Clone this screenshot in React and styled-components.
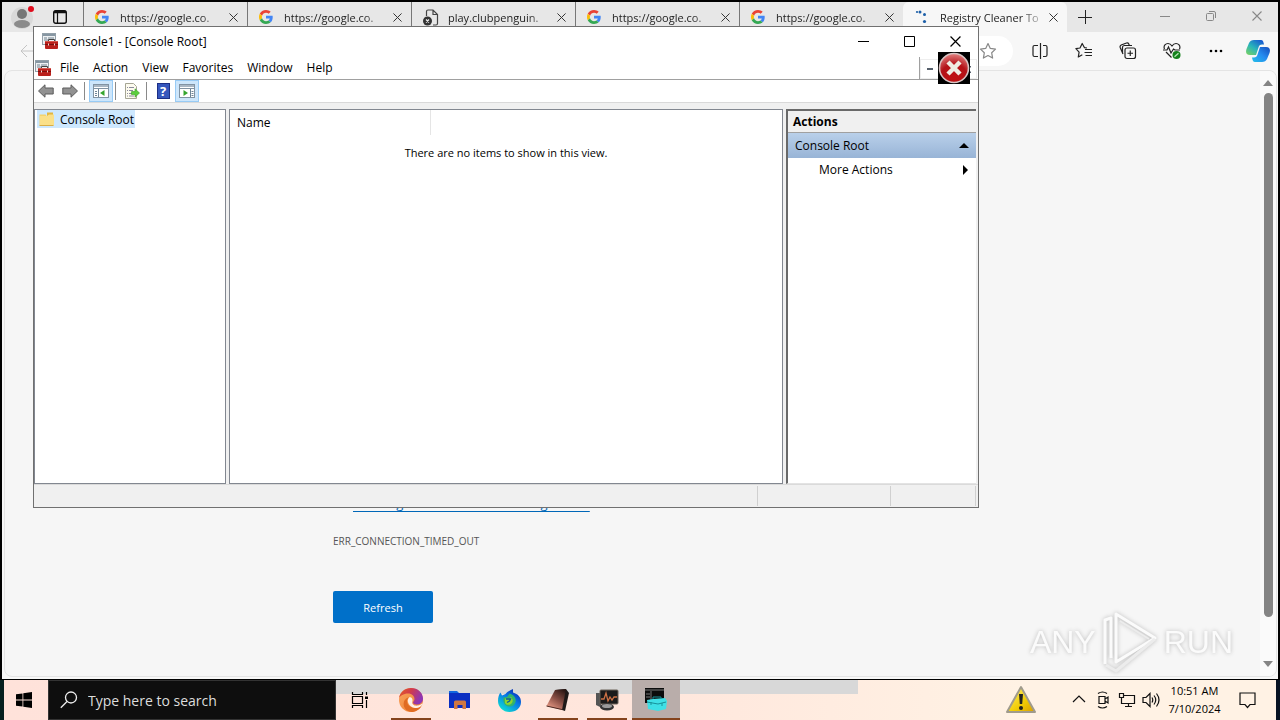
import React, { useState } from 'react';
import styled, { createGlobalStyle } from 'styled-components';

const tabs = [
  { id: 1, title: 'https://google.co.', icon: 'google' },
  { id: 2, title: 'https://google.co.', icon: 'google' },
  { id: 3, title: 'play.clubpenguin.', icon: 'broken' },
  { id: 4, title: 'https://google.co.', icon: 'google' },
  { id: 5, title: 'https://google.co.', icon: 'google' },
  { id: 6, title: 'Registry Cleaner To', icon: 'loading' },
];

const menus = ['File', 'Action', 'View', 'Favorites', 'Window', 'Help'];

const GoogleIcon = () => (
  <svg width="14" height="14" viewBox="0 0 48 48">
    <path fill="#EA4335" d="M24 9.5c3.54 0 6.71 1.22 9.21 3.6l6.85-6.85C35.9 2.38 30.47 0 24 0 14.62 0 6.51 5.38 2.56 13.22l7.98 6.19C12.43 13.72 17.74 9.5 24 9.5z" />
    <path fill="#4285F4" d="M46.98 24.55c0-1.57-.15-3.09-.38-4.55H24v9.02h12.94c-.58 2.96-2.26 5.48-4.78 7.18l7.73 6c4.51-4.18 7.09-10.36 7.09-17.65z" />
    <path fill="#FBBC05" d="M10.53 28.59c-.48-1.45-.76-2.99-.76-4.59s.27-3.14.76-4.59l-7.98-6.19C.92 16.46 0 20.12 0 24c0 3.88.92 7.54 2.56 10.78l7.97-6.19z" />
    <path fill="#34A853" d="M24 48c6.48 0 11.93-2.13 15.89-5.81l-7.73-6c-2.15 1.45-4.92 2.3-8.16 2.3-6.26 0-11.57-4.22-13.47-9.91l-7.98 6.19C6.51 42.62 14.62 48 24 48z" />
  </svg>
);

const BrokenPageIcon = () => (
  <svg width="16" height="17" viewBox="0 0 16 17" fill="none">
    <path d="M3.5 7V2.5A1.5 1.5 0 0 1 5 1h5l4.5 4.5v9A1.5 1.5 0 0 1 13 16h-3M10 1v4.500h4.500" stroke="#444" strokeWidth="1.200" />
    <circle cx="4.500" cy="12" r="4.500" fill="#333" />
    <path d="M3 10.500l3 3m0-3l-3 3" stroke="#eee" strokeWidth="1.200" />
  </svg>
);

const LoadingIcon = () => (
  <svg width="14" height="14" viewBox="0 0 14 14" fill="#1d5fa8">
    <circle cx="2" cy="2" r="1.100" />
    <circle cx="5" cy="2" r="1.500" />
    <circle cx="9.500" cy="4.500" r="1.500" />
    <circle cx="9.500" cy="11.500" r="1.600" />
  </svg>
);

const CrossIcon = ({ size = 9 }) => (
  <svg width={size} height={size} viewBox="0 0 10 10" fill="none" stroke="currentColor" strokeWidth="1.100">
    <path d="M.5.5l9 9m0-9l-9 9" />
  </svg>
);

const ProfileIcon = () => (
  <svg width="24" height="24" viewBox="0 0 24 24">
    <circle cx="11" cy="13" r="11" fill="#d9d9d9" />
    <circle cx="11" cy="9" r="5" fill="#777" />
    <ellipse cx="11" cy="19" rx="8" ry="4" fill="#8b8b8b" />
    <circle cx="20" cy="4" r="3" fill="#e00b1c" />
  </svg>
);

const WorkspaceIcon = () => (
  <svg width="14" height="14" viewBox="0 0 14 14" fill="none" stroke="#111">
    <rect x=".7" y=".7" width="12.600" height="12.600" rx="2" strokeWidth="1.400" />
    <path d="M1 2h12" strokeWidth="2.500" />
    <path d="M4.500 3v10" strokeWidth="1.200" />
  </svg>
);

const ConsoleIcon = () => (
  <svg width="16" height="16" viewBox="0 0 16 16">
    <rect x=".5" y=".5" width="13" height="11" fill="#eef1f3" stroke="#93a0a9" />
    <rect x="1" y="1" width="12" height="2" fill="#8696a2" />
    <path d="M2 5h3m1 0h6M2 7h4" stroke="#71828f" />
    <path d="M6.500 8.500V6.500h6v2" fill="none" stroke="#444" />
    <rect x="3" y="8" width="13" height="8" rx="1" fill="#b9201c" />
    <path d="M3.500 8.500h12" stroke="#d9564b" />
    <path d="M3 11.500h13" stroke="#7d100e" />
    <path d="M6.500 10.500v2m6-2v2" stroke="#f5d9d5" />
  </svg>
);

const ArrowIcon = ({ right }) => (
  <svg width="16" height="14" viewBox="0 0 16 14">
    <path
      d={right ? 'M15.500 7L9 .8V4H.8v6H9v3.200z' : 'M.5 7L7 .8V4h8.200v6H7v3.200z'}
      fill="#929292"
      stroke="#5c5c5c"
    />
  </svg>
);

const PaneIcon = ({ right }) => (
  <svg width="16" height="14" viewBox="0 0 16 14">
    <rect x=".5" y=".5" width="15" height="13" fill="#fff" stroke="#8193a3" />
    <rect x="1" y="1" width="14" height="2" fill="#a9b7c4" />
    <path d="M1 4.500h14" stroke="#8193a3" />
    <path d={right ? 'M11.500 5v8M12.500 7.500h2m-2 2h2m-2 2h2' : 'M5.500 5v8M2 7.500h2m-2 2h2m-2 2h2'} stroke="#6e8496" />
    <path d={right ? 'M4.500 6v6L9 9z' : 'M11.500 6v6L7 9z'} fill="#35a52d" />
  </svg>
);

const ExportIcon = () => (
  <svg width="16" height="16" viewBox="0 0 16 16">
    <path d="M1.500.5h8l3 3v12h-11z" fill="#fdfbef" stroke="#a5a594" />
    <path d="M3 4.500h1m1 0h5M3 7.500h1m1 0h4M3 10.500h1m1 0h3M3 13h1m1 0h5" stroke="#8a8a9d" />
    <path d="M7.500 8.500H11V5.800l4.500 4.200-4.500 4.200v-2.700H7.500z" fill="#5bcf3e" stroke="#3da028" strokeWidth=".6" />
  </svg>
);

const FolderIcon = () => (
  <svg width="16" height="14" viewBox="0 0 16 14">
    <path d="M8 .5h6v5H8z" fill="#e3b740" />
    <path d="M.5 2.500h6l1.500 2h6.500v9H.5z" fill="#f4d36e" />
    <path d="M1 4h7l2-1.500h5V13H1z" fill="#fae08a" />
    <path d="M.5 13.500h14" stroke="#d9ae48" />
  </svg>
);

const ErrorIcon = () => (
  <svg width="32" height="32" viewBox="0 0 32 32">
    <defs>
      <radialGradient id="errorRed" cx=".5" cy=".85" r=".8">
        <stop offset="0" stopColor="#c01010" />
        <stop offset=".6" stopColor="#b31218" />
        <stop offset="1" stopColor="#dd7474" />
      </radialGradient>
    </defs>
    <circle cx="16" cy="16" r="14.500" fill="url(#errorRed)" stroke="#d8c4c4" strokeWidth="1.600" />
    <path d="M10 10l12 12m0-12L10 22" stroke="#efece2" strokeWidth="4.500" />
  </svg>
);

const StarIcon = ({ lines }) => (
  <svg width="18" height="18" viewBox="0 0 18 18" fill="none" stroke="currentColor" strokeWidth="1.200" strokeLinejoin="round">
    {lines ? (
      <path d="M12 6L9.500 5.700 7.200 1.500 5 6 .9 6.700l3.200 3.400L3.300 15l4-2.200M10 7.500h7M9.500 10.500H17M10.500 13.500H17" />
    ) : (
      <path d="M9 1.500l2.300 4.900 5.200.7-3.800 3.700.9 5.300L9 13.500l-4.600 2.600.9-5.300L1.500 7.100l5.200-.7z" />
    )}
  </svg>
);

const SplitIcon = () => (
  <svg width="16" height="16" viewBox="0 0 16 16" fill="none" stroke="#222" strokeWidth="1.200">
    <path d="M8.500 0v16M6 2.500H2.500A1.500 1.500 0 0 0 1 4v8a1.500 1.500 0 0 0 1.500 1.500H6M11 2.500h2.500A1.500 1.500 0 0 1 15 4v8a1.500 1.500 0 0 1-1.500 1.500H11" />
  </svg>
);

const CollectionsIcon = () => (
  <svg width="18" height="18" viewBox="0 0 18 18" fill="none" stroke="#222" strokeWidth="1.200">
    <rect x="6" y="6" width="10.500" height="10.500" rx="2" />
    <path d="M11.250 8.500v5.500M8.500 11.250H14M4 12L1.200 5.500C.8 4.300 1.200 3.500 2.200 3L7.500 1c1-.3 1.800 0 2.300 1l.5 1.500M3.500 11V5.500a2 2 0 0 1 2-2h7.500" />
  </svg>
);

const HealthIcon = () => (
  <svg width="18" height="18" viewBox="0 0 18 18" fill="none" stroke="#222" strokeWidth="1.200">
    <path d="M1.500 7C0 3.500 3 1.500 5 1.500c2 0 3 1 4 2.500 1-1.500 2-2.500 4-2.500s5 2 3.500 5.500M3 10l5.500 5.500" />
    <path d="M0 8h4l1.500-3L8 11l2.500-4L12 8h5" />
    <circle cx="13.500" cy="13" r="4" fill="#13811b" stroke="none" />
    <path d="M11.500 14.800l4-3.600" stroke="#b8e6b8" />
  </svg>
);

const CopilotIcon = () => (
  <svg width="24" height="24" viewBox="0 0 24 24">
    <defs>
      <linearGradient id="copilotLeft" x1="0" y1="1" x2=".8" y2="0">
        <stop offset="0" stopColor="#7ed35c" />
        <stop offset=".5" stopColor="#29b5ba" />
        <stop offset="1" stopColor="#185bd1" />
      </linearGradient>
      <linearGradient id="copilotRight" x1="1" y1="0" x2="0" y2="1">
        <stop offset="0" stopColor="#154cba" />
        <stop offset=".5" stopColor="#268cf0" />
        <stop offset="1" stopColor="#24bfe8" />
      </linearGradient>
    </defs>
    <path d="M8 1h7c2 0 2.500 2 3 4.500h-2c-2 0-3 1-3.500 3L10 16H4c-4 0-4.500-3-3.500-6L3 4c1-2 2.500-3 5-3z" fill="url(#copilotLeft)" />
    <path d="M16 23H9c-2 0-2.500-2-3-4.500h2c2 0 3-1 3.500-3L14 8h6c4 0 4.500 3 3.500 6L21 20c-1 2-2.500 3-5 3z" fill="url(#copilotRight)" />
  </svg>
);

const WindowsIcon = () => (
  <svg width="16" height="16" viewBox="0 0 16 16" fill="#000">
    <path d="M0 2.300L6.500 1.400v6.200H0zM7.300 1.300L16 0v7.600H7.300zM0 8.400h6.500v6.200L0 13.700zM7.300 8.400H16V16l-8.700-1.300z" />
  </svg>
);

const SearchIcon = () => (
  <svg width="18" height="18" viewBox="0 0 18 18" fill="none" stroke="#eee" strokeWidth="1.300">
    <circle cx="11" cy="6.500" r="5.500" />
    <path d="M7 10.500L.8 16.800" />
  </svg>
);

const TaskViewIcon = () => (
  <svg width="18" height="16" viewBox="0 0 18 16" fill="none" stroke="#000" strokeWidth="1.200">
    <path d="M1.500 0v2.500h10V0M1.500 16v-2.500h10V16M1.500 4.500h10v7h-10zM15.500 0v3M15.500 8v8" />
    <path d="M14 4.500h3v2.500h-3z" fill="#000" stroke="none" />
  </svg>
);

const EdgeIcon = () => (
  <svg width="24" height="24" viewBox="0 0 24 24">
    <defs>
      <linearGradient id="edgeTop" x1="0" y1="0" x2="1" y2=".4">
        <stop offset="0" stopColor="#e8601f" />
        <stop offset=".5" stopColor="#d03a4e" />
        <stop offset="1" stopColor="#8f36b5" />
      </linearGradient>
      <linearGradient id="edgeBase" x1="0" y1="0" x2="1" y2="1">
        <stop offset="0" stopColor="#f9a55c" />
        <stop offset="1" stopColor="#ee7d33" />
      </linearGradient>
    </defs>
    <circle cx="12" cy="12" r="12" fill="url(#edgeBase)" />
    <path d="M0 10C1 4 6 0 12 0c7 0 12 5 12 10.500 0 4-3 6-6.500 6-2 0-3.500-.8-3.500-2 0-1 1.500-1.500 1.500-3.500C15.500 8 13 5.500 9 5.500 4.500 5.500 1 8 0 10z" fill="url(#edgeTop)" />
    <path d="M10 9.500C6 12 8 19 15 20c3 .4 5.500-.5 7.500-2-2 3.500-6 6-10 6C6.500 23.500 3.500 18 5 13.500c.8-2.300 2.700-4 5-4z" fill="#e06c23" />
    <path d="M10 9.500c2.200-.7 4.300 1.500 3.300 4.500-.5 2.500 2.200 4.200 5.700 3.500 1.500-.3 3-1 4-2l.5.500C22 19 19 20.500 16 20c-6-1-9-7-6-10.500z" fill="#fff0e6" />
  </svg>
);

const ExplorerIcon = () => (
  <svg width="22" height="20" viewBox="0 0 22 20">
    <path d="M0 1h8l2 2h11v5H0z" fill="#1268e0" />
    <path d="M0 3h21v15H0z" fill="#0a2fc2" />
    <path d="M5 19v-7q0-1.500 1.500-1.500h9q1.500 0 1.500 1.500v7h-3.500v-4h-5v4z" fill="#cf7840" />
  </svg>
);

const FirefoxIcon = () => (
  <svg width="23" height="23" viewBox="0 0 23 23">
    <defs>
      <linearGradient id="foxBlue" x1=".9" y1="0" x2=".2" y2="1">
        <stop offset="0" stopColor="#0a1cac" />
        <stop offset=".45" stopColor="#0779e6" />
        <stop offset="1" stopColor="#11e5cf" />
      </linearGradient>
    </defs>
    <path d="M2.500 3.500l1.500 3L7.500 5C9 3 12 1.500 15 0v3.500C20 5 23 8 23 13c0 6-5 10-11.500 10S0 18 0 12c0-4 1-6.500 2.500-8.500z" fill="url(#foxBlue)" />
    <path d="M5.500 8.500L9 8l2.500-3.500c4 1 7 4.500 6 8.500-1 3.500-4 5-7 4.500C7 17 4.500 13 5.500 8.500z" fill="#31b36d" />
    <path d="M7 9.500h4.500L13 8c2 2 2.500 5 0 7-2 1.500-5 1-6-1z" fill="#8bd431" />
    <path d="M8 10h4.500l-1 2-2.500 1.500" fill="none" stroke="#075e9f" strokeWidth="1.300" />
  </svg>
);

const NotebookIcon = () => (
  <svg width="24" height="24" viewBox="0 0 24 24">
    <defs>
      <linearGradient id="noteRed" x1=".8" y1="0" x2=".2" y2="1">
        <stop offset="0" stopColor="#2b1714" />
        <stop offset=".5" stopColor="#8d5147" />
        <stop offset="1" stopColor="#f0a08b" />
      </linearGradient>
    </defs>
    <path d="M9 2l11-1 3 4-4 18-3-1z" fill="#1f1918" />
    <path d="M9 2l11-1-4 21L.5 18z" fill="url(#noteRed)" />
    <path d="M.5 18l15.500 3.500" stroke="#4a2721" />
  </svg>
);

const MonitorAppIcon = () => (
  <svg width="24" height="24" viewBox="0 0 24 24">
    <path d="M1 5h5v12l6 1-3 3-8-4z" fill="#555" />
    <rect x="5" y="2" width="18" height="14" rx="1" fill="#1b1b1b" stroke="#6b6259" />
    <path d="M6 11h3l2-6 2 8 2-4 2 3 2-3h3" fill="none" stroke="#cd7245" strokeWidth="1.300" />
    <ellipse cx="12" cy="19" rx="7" ry="3.500" fill="#333" />
    <ellipse cx="12" cy="18" rx="5" ry="2" fill="#9a9a9a" />
  </svg>
);

const ToolboxAppIcon = () => (
  <svg width="24" height="24" viewBox="0 0 24 24">
    <rect x="1" y="0" width="19" height="15" fill="#0c0c0c" />
    <path d="M1 2h19M2 6h4M2 9h4M7 3v9" stroke="#777" />
    <path d="M3 12l6-1 12-1 2 3-1 8-8 2-10-2z" fill="#3ee0e6" />
    <path d="M3 14l11 2 8-2M9 11V9h8v1.500M7 14v3m11-2v3" fill="none" stroke="#16929a" />
  </svg>
);

const WarningIcon = () => (
  <svg width="32" height="30" viewBox="0 0 32 30">
    <defs>
      <linearGradient id="warnYellow" x1="0" y1="0" x2="1" y2="1">
        <stop offset="0" stopColor="#fff27a" />
        <stop offset=".6" stopColor="#f2cc05" />
        <stop offset="1" stopColor="#d89d00" />
      </linearGradient>
    </defs>
    <path d="M16 2L30 27H2z" fill="url(#warnYellow)" stroke="#a09b8c" strokeWidth="2" strokeLinejoin="round" />
    <path d="M14 9h4l-.8 10h-2.400z" fill="#222" />
    <circle cx="16" cy="23" r="2" fill="#222" />
  </svg>
);

const TrayGlyph = ({ name }) => {
  const shapes = {
    chevron: 'M3 11l6-6 6 6',
    camera: 'M5 5.500h6v7H5zM11 8l3-2v6l-3-2M4 2.500C7 .5 10 .5 13 2.500M4 15.500c3 2 6 2 9 0',
    network: 'M5 4.500h11.500v8H5M1.500 2.500h4v4h-4zM3.500 6.500v6H6M10.500 12.500v3M7 15.500h7',
    volume: 'M1 6.500h3l4-4v13l-4-4H1zM10 6.500q1.500 2.500 0 5M12 4.500q3.500 4.500 0 9M14.500 2.500q5 6.500 0 13',
  };
  return (
    <svg width="18" height="18" viewBox="0 0 18 18" fill="none" stroke="#111" strokeWidth="1.200">
      <path d={shapes[name]} />
    </svg>
  );
};

const PlayLogo = () => (
  <svg width="54" height="62" viewBox="0 0 54 62" fill="none" stroke="#fbfbfb" strokeWidth="3" strokeLinejoin="round">
    <path d="M2 53V9l6-2v40" />
    <path d="M13 3l39 24-39 24z" />
    <path d="M3 54l10 6 39-32" stroke="#ececec" />
    <path d="M17 10l29 18" stroke="#ececec" strokeWidth="2" />
  </svg>
);

const tabIcons = {
  google: <GoogleIcon />,
  broken: <BrokenPageIcon />,
  loading: <LoadingIcon />,
};

const apps = [
  { name: 'Microsoft Edge', icon: <EdgeIcon />, open: true },
  { name: 'File Explorer', icon: <ExplorerIcon /> },
  { name: 'Firefox', icon: <FirefoxIcon /> },
  { name: 'Registry', icon: <NotebookIcon />, open: true },
  { name: 'Performance Monitor', icon: <MonitorAppIcon />, open: true },
  { name: 'Management Console', icon: <ToolboxAppIcon />, open: true, active: true },
];

const Browser = () => {
  const [activeTab, setActiveTab] = useState(6);

  return (
    <BrowserFrame>
      <TabStrip>
        <ProfileButton aria-label="Profile"><ProfileIcon /></ProfileButton>
        <WorkspaceButton aria-label="Workspaces"><WorkspaceIcon /></WorkspaceButton>
        {tabs.map((tab) => (
          <Tab key={tab.id} $active={tab.id === activeTab}>
            <TabButton onClick={() => setActiveTab(tab.id)}>
              <TabIcon>{tabIcons[tab.icon]}</TabIcon>
              <TabTitle>{tab.title}</TabTitle>
            </TabButton>
            <TabClose aria-label="Close tab"><CrossIcon /></TabClose>
          </Tab>
        ))}
        <NewTab aria-label="New tab">
          <svg width="14" height="14" viewBox="0 0 14 14" stroke="#222"><path d="M7.500 0v14M0 7.500h14" /></svg>
        </NewTab>
        <BrowserControls>
          <BrowserControl aria-label="Minimize">
            <svg width="10" height="10" viewBox="0 0 10 10" stroke="currentColor"><path d="M0 5.500h10" /></svg>
          </BrowserControl>
          <BrowserControl aria-label="Restore">
            <svg width="10" height="10" viewBox="0 0 10 10" fill="none" stroke="currentColor">
              <rect x=".5" y="2.500" width="7" height="7" rx="1" />
              <path d="M3 .5h5q1.500 0 1.500 1.500v5" />
            </svg>
          </BrowserControl>
          <BrowserControl aria-label="Close"><CrossIcon size={10} /></BrowserControl>
        </BrowserControls>
      </TabStrip>
      <AddressRow>
        <BackButton aria-label="Back">
          <svg width="16" height="14" viewBox="0 0 16 14" fill="none" stroke="#c4c4c4"><path d="M16 7H1M7 1L1 7l6 6" /></svg>
        </BackButton>
        <AddressBar>
          <IconButton aria-label="Add to favorites" $muted><StarIcon /></IconButton>
        </AddressBar>
        <BrowserTools>
          <IconButton aria-label="Split screen"><SplitIcon /></IconButton>
          <IconButton aria-label="Favorites"><StarIcon lines /></IconButton>
          <IconButton aria-label="Collections"><CollectionsIcon /></IconButton>
          <IconButton aria-label="Browser essentials"><HealthIcon /></IconButton>
          <IconButton aria-label="Settings and more">
            <svg width="14" height="4" viewBox="0 0 14 4"><circle cx="2" cy="2" r="1.300" /><circle cx="7" cy="2" r="1.300" /><circle cx="12" cy="2" r="1.300" /></svg>
          </IconButton>
          <CopilotButton aria-label="Copilot"><CopilotIcon /></CopilotButton>
        </BrowserTools>
      </AddressRow>
      <Page>
        <PageBody>
          <DiagnosticsLink href="#diagnostics">Running Windows Network Diagnostics</DiagnosticsLink>
          <ErrorCode>ERR_CONNECTION_TIMED_OUT</ErrorCode>
          <RefreshButton>Refresh</RefreshButton>
        </PageBody>
        <ScrollTrack>
          <ScrollArrow $up />
          <ScrollThumb />
          <ScrollArrow />
        </ScrollTrack>
      </Page>
    </BrowserFrame>
  );
};

const ConsoleWindow = () => (
  <WindowFrame>
    <TitleBar>
      <ConsoleIcon />
      <WindowTitle>Console1 - [Console Root]</WindowTitle>
      <WindowButton aria-label="Minimize">
        <svg width="11" height="11" viewBox="0 0 11 11" stroke="#000"><path d="M0 5.500h11" /></svg>
      </WindowButton>
      <WindowButton aria-label="Maximize">
        <svg width="11" height="11" viewBox="0 0 11 11" fill="none" stroke="#000"><path d="M.5.5h10v10H.5z" /></svg>
      </WindowButton>
      <WindowButton aria-label="Close"><CrossIcon size={11} /></WindowButton>
    </TitleBar>
    <MenuBar>
      <ConsoleIcon />
      <MenuItems>
        {menus.map((menu) => (
          <MenuButton key={menu}>{menu}</MenuButton>
        ))}
      </MenuItems>
      <ChildControls>
        <ChildButton aria-label="Minimize child window">
          <svg width="6" height="2"><path d="M0 1h6" stroke="#56606c" strokeWidth="2" /></svg>
        </ChildButton>
        <ChildButton aria-label="Restore child window" />
        <ChildButton aria-label="Close child window">
          <svg width="7" height="7" viewBox="0 0 7 7" stroke="#56606c" strokeWidth="1.500"><path d="M0 0l7 7M7 0L0 7" /></svg>
        </ChildButton>
      </ChildControls>
    </MenuBar>
    <ToolBar>
      <ToolButton aria-label="Back"><ArrowIcon /></ToolButton>
      <ToolButton aria-label="Forward"><ArrowIcon right /></ToolButton>
      <ToolDivider />
      <ToolButton aria-label="Show console tree" $pressed><PaneIcon /></ToolButton>
      <ToolDivider />
      <ToolButton aria-label="Export list"><ExportIcon /></ToolButton>
      <ToolDivider />
      <ToolButton aria-label="Help"><HelpBadge>?</HelpBadge></ToolButton>
      <ToolButton aria-label="Show action pane" $pressed><PaneIcon right /></ToolButton>
    </ToolBar>
    <Panes>
      <TreePane>
        <TreeItem><FolderIcon />Console Root</TreeItem>
      </TreePane>
      <ListPane>
        <ListTable>
          <thead>
            <tr>
              <ListHeader>Name</ListHeader>
              <td />
            </tr>
          </thead>
          <tbody>
            <tr>
              <EmptyCell colSpan={2}>There are no items to show in this view.</EmptyCell>
            </tr>
          </tbody>
        </ListTable>
      </ListPane>
      <ActionsPane>
        <ActionsTitle>Actions</ActionsTitle>
        <ActionGroup>
          Console Root
          <svg width="10" height="5" viewBox="0 0 10 5"><path d="M0 5l5-5 5 5z" /></svg>
        </ActionGroup>
        <ActionItem>
          More Actions
          <svg width="5" height="10" viewBox="0 0 5 10"><path d="M0 0l5 5-5 5z" /></svg>
        </ActionItem>
      </ActionsPane>
    </Panes>
    <StatusBar>
      <StatusCell $grow />
      <StatusCell $width={133} />
      <StatusCell $width={85} />
    </StatusBar>
  </WindowFrame>
);

const Taskbar = () => (
  <TaskbarFrame>
    <StartButton aria-label="Start"><WindowsIcon /></StartButton>
    <SearchBox>
      <SearchIcon />
      <SearchInput aria-label="Search" placeholder="Type here to search" />
    </SearchBox>
    <TaskButton aria-label="Task view"><TaskViewIcon /></TaskButton>
    <AppList>
      {apps.map((app) => (
        <TaskButton key={app.name} aria-label={app.name} $open={app.open} $active={app.active}>
          {app.icon}
        </TaskButton>
      ))}
    </AppList>
    <Tray>
      <AlertButton aria-label="Warning"><WarningIcon /></AlertButton>
      <TrayButton aria-label="Show hidden icons"><TrayGlyph name="chevron" /></TrayButton>
      <TrayButton aria-label="Camera"><TrayGlyph name="camera" /></TrayButton>
      <TrayButton aria-label="Network"><TrayGlyph name="network" /></TrayButton>
      <TrayButton aria-label="Volume"><TrayGlyph name="volume" /></TrayButton>
      <Clock>
        <span>10:51 AM</span>
        <span>7/10/2024</span>
      </Clock>
      <NoticeButton aria-label="Notifications">
        <svg width="17" height="17" viewBox="0 0 17 17" fill="none" stroke="#111" strokeWidth="1.200"><path d="M1 1h15v11.500h-5L8.500 15.500 6 12.500H1z" /></svg>
      </NoticeButton>
    </Tray>
  </TaskbarFrame>
);

const App = () => (
  <>
    <GlobalStyle />
    <Desktop>
      <Browser />
      <Taskbar />
      <ConsoleWindow />
      <ErrorCursor><ErrorIcon /></ErrorCursor>
      <Watermark>
        ANY
        <PlayLogo />
        RUN
      </Watermark>
    </Desktop>
  </>
);

export default App;

const GlobalStyle = createGlobalStyle`
  * {
    box-sizing: border-box;
  }

  body {
    margin: 0;
    background: #000;
    font-family: 'Open Sans', 'Noto Sans', sans-serif;
    font-size: 12px;
    color: #000;
  }

  button, input {
    font: inherit;
    color: inherit;
    border: 0;
    padding: 0;
    background: none;
  }

  svg {
    display: block;
    flex: none;
  }
`;

const Desktop = styled.div`
  position: relative;
  display: flex;
  flex-direction: column;
  height: 100vh;
  overflow: hidden;
`;

const BrowserFrame = styled.main`
  display: flex;
  flex-direction: column;
  flex: 1;
  min-height: 0;
  margin: 2px 2px 1px;
  background: #f7f7f7;
`;

const TabStrip = styled.div`
  display: flex;
  height: 30px;
  background: #e7e7e7;
`;

const ProfileButton = styled.button`
  width: 40px;
  padding-left: 9px;
`;

const WorkspaceButton = styled.button`
  display: flex;
  justify-content: center;
  align-items: center;
  width: 41px;
  padding-right: 6px;
`;

const Tab = styled.div`
  display: flex;
  align-items: center;
  flex: 0 1 164px;
  min-width: 0;
  border-left: 1px solid ${({ $active }) => ($active ? '#f7f7f7' : '#777')};
  border-radius: ${({ $active }) => ($active ? '6px 6px 0 0' : '0')};
  background: ${({ $active }) => ($active ? '#f7f7f7' : 'transparent')};
`;

const TabButton = styled.button`
  display: flex;
  align-items: center;
  flex: 1;
  min-width: 0;
  height: 28px;
  padding-left: 11px;
`;

const TabIcon = styled.span`
  display: flex;
  flex: none;
  width: 25px;
`;

const TabTitle = styled.span`
  flex: 1;
  overflow: hidden;
  white-space: nowrap;
  text-align: left;
  font-size: 11px;
  color: #222;
  mask-image: linear-gradient(to right, #000 80%, rgba(0, 0, 0, 0.3));
`;

const TabClose = styled.button`
  display: flex;
  justify-content: center;
  align-items: center;
  width: 28px;
  height: 28px;
  color: #333;
`;

const NewTab = styled.button`
  display: flex;
  justify-content: center;
  align-items: center;
  width: 36px;
`;

const BrowserControls = styled.div`
  display: flex;
  gap: 4px;
  margin-left: auto;
`;

const BrowserControl = styled.button`
  display: flex;
  justify-content: center;
  align-items: center;
  width: 42px;
  height: 28px;
  color: #888;
`;

const AddressRow = styled.div`
  display: flex;
  align-items: center;
  height: 38px;
  padding-right: 8px;
`;

const BackButton = styled.button`
  width: 60px;
  padding-left: 18px;
`;

const AddressBar = styled.div`
  display: flex;
  align-items: center;
  justify-content: flex-end;
  flex: 1;
  height: 30px;
  padding-right: 3px;
  border-radius: 15px;
  background: #fff;
`;

const IconButton = styled.button`
  display: flex;
  justify-content: center;
  align-items: center;
  width: 44px;
  height: 30px;
  color: ${({ $muted }) => ($muted ? '#888' : '#222')};
`;

const BrowserTools = styled.div`
  display: flex;
  align-items: center;
  padding-left: 5px;
`;

const CopilotButton = styled.button`
  margin-left: 8px;
`;

const Page = styled.div`
  display: flex;
  flex: 1;
  min-height: 0;
  margin: 0 1px 2px 2px;
  border: 1px solid #e4e4e4;
  border-radius: 8px;
  background: #f6f6f6;
  overflow: hidden;
`;

const PageBody = styled.section`
  display: flex;
  flex-direction: column;
  align-items: flex-start;
  flex: 1;
  padding: 422px 0 0 328px;
`;

const DiagnosticsLink = styled.a`
  margin-left: 20px;
  font-size: 13px;
  line-height: 20px;
  color: #0067b8;
  text-underline-offset: 3px;
`;

const ErrorCode = styled.div`
  margin-top: 20px;
  font-size: 10px;
  line-height: 16px;
  color: #555;
`;

const RefreshButton = styled.button`
  width: 100px;
  height: 32px;
  margin-top: 42px;
  border-radius: 2px;
  background: #0070c9;
  font-size: 11px;
  color: #fff;
`;

const ScrollTrack = styled.div`
  display: flex;
  flex-direction: column;
  align-items: center;
  width: 16px;
  padding: 9px 0;
  background: #fafafa;
`;

const ScrollArrow = styled.span`
  border: 5px solid transparent;
  border-top: ${({ $up }) => ($up ? '0' : '6px solid #858585')};
  border-bottom: ${({ $up }) => ($up ? '6px solid #858585' : '0')};
`;

const ScrollThumb = styled.span`
  flex: 1;
  width: 9px;
  margin: 7px 0 44px;
  border-radius: 5px;
  background: #858585;
`;

const WindowFrame = styled.section`
  position: absolute;
  top: 26px;
  left: 33px;
  display: flex;
  flex-direction: column;
  width: 946px;
  height: 482px;
  border: 1px solid #707070;
  background: #fff;
`;

const TitleBar = styled.header`
  display: flex;
  align-items: center;
  height: 30px;
  padding: 0 0 2px 8px;
`;

const WindowTitle = styled.span`
  flex: 1;
  padding-left: 5px;
`;

const WindowButton = styled.button`
  display: flex;
  justify-content: center;
  align-items: center;
  width: 46px;
  height: 28px;
`;

const MenuBar = styled.nav`
  display: flex;
  align-items: center;
  height: 23px;
  padding-left: 1px;
  border-bottom: 1px solid #a0a0a0;
`;

const MenuItems = styled.div`
  display: flex;
  flex: 1;
  padding-left: 2px;
`;

const MenuButton = styled.button`
  padding: 0 7px;
  line-height: 20px;
`;

const ChildControls = styled.div`
  display: flex;
  width: 59px;
  height: 22px;
  border-left: 1px solid #a0a0a0;
`;

const ChildButton = styled.button`
  display: flex;
  justify-content: center;
  align-items: center;
  width: 19px;
  height: 20px;
  margin-top: 2px;
  border: 1px solid #eee;
`;

const ToolBar = styled.div`
  display: flex;
  align-items: center;
  height: 23px;
  border-bottom: 1px solid #d9d9d9;
`;

const ToolButton = styled.button`
  display: flex;
  justify-content: center;
  align-items: center;
  width: 24px;
  height: 22px;
  border: 1px solid ${({ $pressed }) => ($pressed ? '#98cbf5' : 'transparent')};
  background: ${({ $pressed }) => ($pressed ? '#cde6fb' : 'transparent')};
`;

const ToolDivider = styled.span`
  width: 1px;
  height: 18px;
  margin: 0 4px 0 2px;
  background: #8a8a8a;
`;

const HelpBadge = styled.span`
  width: 13px;
  height: 16px;
  border: 1px solid #1c2f86;
  background: #3556bd;
  color: #fff;
  font-size: 13px;
  font-weight: 700;
  line-height: 14px;
`;

const Panes = styled.div`
  display: flex;
  flex: 1;
  min-height: 0;
  padding: 6px 2px 0 0;
  background: #f0f0f0;
`;

const TreePane = styled.div`
  width: 192px;
  border: 1px solid #828790;
  background: #fff;
`;

const TreeItem = styled.button`
  display: flex;
  align-items: center;
  gap: 5px;
  height: 18px;
  margin: 0 0 0 2px;
  padding: 0 1px 0 2px;
  background: #cde8ff;
`;

const ListPane = styled.div`
  flex: 1;
  margin: 0 3px;
  border: 1px solid #828790;
  background: #fff;
`;

const ListTable = styled.table`
  width: 100%;
  border-collapse: collapse;
  table-layout: fixed;
`;

const ListHeader = styled.th`
  width: 200px;
  height: 25px;
  padding: 0 7px;
  border-right: 1px solid #e5e5e5;
  font-weight: 400;
  text-align: left;
`;

const EmptyCell = styled.td`
  height: 35px;
  padding: 0;
  font-size: 11px;
  text-align: center;
`;

const ActionsPane = styled.aside`
  width: 190px;
  border-top: 2px solid #696969;
  border-left: 2px solid #696969;
  border-bottom: 1px solid #e3e3e3;
  background: #fff;
`;

const ActionsTitle = styled.h2`
  height: 22px;
  margin: 0;
  padding-left: 5px;
  border-bottom: 1px solid #a0a0a0;
  background: #f0f0f0;
  font-size: 12px;
  line-height: 21px;
`;

const ActionGroup = styled.button`
  display: flex;
  align-items: center;
  justify-content: space-between;
  width: 100%;
  height: 25px;
  padding: 0 7px;
  background: linear-gradient(#b9d0ea, #98b4d6);
`;

const ActionItem = styled.button`
  display: flex;
  align-items: center;
  justify-content: space-between;
  width: 100%;
  height: 23px;
  padding: 0 8px 0 31px;
`;

const StatusBar = styled.footer`
  display: flex;
  height: 23px;
  padding-right: 2px;
  border-top: 1px solid #dadada;
  background: #f0f0f0;
`;

const StatusCell = styled.div`
  flex: ${({ $grow }) => ($grow ? '1' : 'none')};
  width: ${({ $width }) => ($width ? `${$width}px` : 'auto')};
  margin: 1px 0;
  border-right: 1px solid #d0d0d0;
`;

const ErrorCursor = styled.div`
  position: absolute;
  top: 52px;
  left: 938px;
  background: #000;
`;

const Watermark = styled.div`
  position: absolute;
  right: 47px;
  bottom: 47px;
  display: flex;
  align-items: center;
  gap: 7px;
  font-family: 'Liberation Sans Narrow', 'Liberation Sans', sans-serif;
  font-size: 32px;
  line-height: 62px;
  color: #fbfbfb;
  filter: drop-shadow(0 0 2px #bbb);
`;

const TaskbarFrame = styled.footer`
  display: flex;
  height: 40px;
  border-left: 4px solid #06201f;
  border-right: 4px solid #071322;
  background:
    linear-gradient(#d8d8d8, #d8d8d8) 332px 0 / 522px 14px no-repeat,
    linear-gradient(to right, #ffe2da, #ffe6dc 50%, #fff2e4 80%);
`;

const StartButton = styled.button`
  display: flex;
  justify-content: center;
  align-items: center;
  width: 44px;
  padding-right: 4px;
`;

const SearchBox = styled.label`
  display: flex;
  align-items: center;
  gap: 10px;
  flex: 0 1 288px;
  padding-left: 11px;
  border: 1px solid #333;
  background: #0e0e0e;
`;

const SearchInput = styled.input`
  flex: 1;
  min-width: 0;
  font-size: 14px;
  color: #fff;

  &::placeholder {
    color: #ddd;
  }
`;

const TaskButton = styled.button`
  display: flex;
  justify-content: center;
  align-items: center;
  width: 48px;
  background-color: ${({ $active }) => ($active ? '#b9adaa' : 'transparent')};
  background-image: ${({ $open }) => ($open ? 'linear-gradient(#84431c, #84431c)' : 'none')};
  background-position: bottom;
  background-size: ${({ $active }) => ($active ? '48px' : '40px')} 2px;
  background-repeat: no-repeat;
`;

const AppList = styled.div`
  display: flex;
  gap: 1px;
  padding-left: 3px;
`;

const Tray = styled.div`
  display: flex;
  align-items: center;
  margin-left: auto;
  padding-right: 8px;
`;

const AlertButton = styled.button`
  margin-right: 30px;
`;

const TrayButton = styled.button`
  display: flex;
  justify-content: center;
  width: 24px;
`;

const Clock = styled.button`
  display: flex;
  flex-direction: column;
  align-items: center;
  width: 63px;
  font-size: 11px;
  line-height: 18px;
`;

const NoticeButton = styled.button`
  display: flex;
  justify-content: center;
  width: 42px;
`;
